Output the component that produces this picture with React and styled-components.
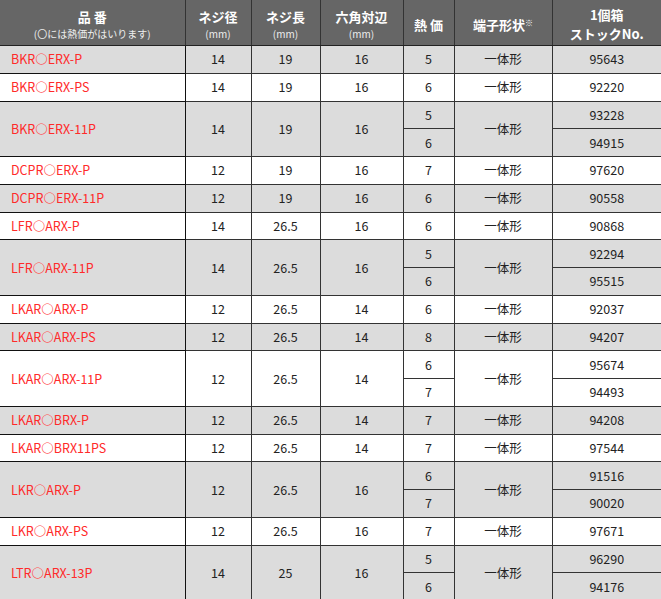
import React from 'react';
import styled, {createGlobalStyle} from 'styled-components';

const Global = createGlobalStyle`
  body {
    margin: 0;
    background: #fff;
    font-family: "Noto Sans CJK JP", "Noto Sans", sans-serif;
  }
`;

const Table = styled.table`
  width: 661px;
  border-collapse: collapse;
  table-layout: fixed;
  font-size: 12.5px;
  color: #222;
`;

const HeadCell = styled.th`
  background: #666;
  color: #fff;
  font-weight: bold;
  font-size: 13px;
  line-height: 19px;
  height: 42px;
  padding: 3px 0 0;
  text-align: center;
  vertical-align: middle;
  border-left: 1px solid #333;
  border-bottom: 1px solid #222;
  &:first-child {
    border-left: none;
  }
`;

const Sub = styled.span`
  display: block;
  font-size: 10px;
  line-height: 15px;
  font-weight: normal;
  color: #eee;
`;

const Mark = styled.sup`
  font-size: 8px;
  font-weight: normal;
  vertical-align: 4px;
  line-height: 0;
`;

const Row = styled.tr`
  background: ${(p) => (p.$gray ? '#dcdcdc' : '#fff')};
  height: 27.75px;
`;

const Cell = styled.td`
  padding: 0;
  text-align: center;
  vertical-align: middle;
  line-height: 16px;
  border: 1px solid #333;
  background: inherit;
`;

const NameCell = styled(Cell)`
  text-align: left;
  padding-left: 11px;
  color: #ff2a2a;
  border-left: none;
  border-color: #111;
`;

const Circle = styled.span`
  font-weight: 300;
  color: #ff5050;
`;

const LastCell = styled(Cell)`
  border-right: none;
`;

const items = [
  ['BKR', 'ERX-P', '14', '19', '16', ['5'], ['95643']],
  ['BKR', 'ERX-PS', '14', '19', '16', ['6'], ['92220']],
  ['BKR', 'ERX-11P', '14', '19', '16', ['5', '6'], ['93228', '94915']],
  ['DCPR', 'ERX-P', '12', '19', '16', ['7'], ['97620']],
  ['DCPR', 'ERX-11P', '12', '19', '16', ['6'], ['90558']],
  ['LFR', 'ARX-P', '14', '26.5', '16', ['6'], ['90868']],
  ['LFR', 'ARX-11P', '14', '26.5', '16', ['5', '6'], ['92294', '95515']],
  ['LKAR', 'ARX-P', '12', '26.5', '14', ['6'], ['92037']],
  ['LKAR', 'ARX-PS', '12', '26.5', '14', ['8'], ['94207']],
  ['LKAR', 'ARX-11P', '12', '26.5', '14', ['6', '7'], ['95674', '94493']],
  ['LKAR', 'BRX-P', '12', '26.5', '14', ['7'], ['94208']],
  ['LKAR', 'BRX11PS', '12', '26.5', '14', ['7'], ['97544']],
  ['LKR', 'ARX-P', '12', '26.5', '16', ['6', '7'], ['91516', '90020']],
  ['LKR', 'ARX-PS', '12', '26.5', '16', ['7'], ['97671']],
  ['LTR', 'ARX-13P', '14', '25', '16', ['5', '6'], ['96290', '94176']],
];

const widths = [185, 66, 69, 83, 51, 98, 109];

const App = () => {
  const rows = [];
  items.forEach(([pre, post, dia, len, hex, heat, stock], i) => {
    const gray = i % 2 === 0;
    const span = heat.length;
    const key = pre + post;
    rows.push(
      <Row key={key} $gray={gray}>
        <NameCell rowSpan={span}>
          {pre}
          <Circle>〇</Circle>
          {post}
        </NameCell>
        <Cell rowSpan={span}>{dia}</Cell>
        <Cell rowSpan={span}>{len}</Cell>
        <Cell rowSpan={span}>{hex}</Cell>
        <Cell>{heat[0]}</Cell>
        <Cell rowSpan={span}>一体形</Cell>
        <LastCell>{stock[0]}</LastCell>
      </Row>
    );
    for (let k = 1; k < span; k++) {
      rows.push(
        <Row key={key + k} $gray={gray}>
          <Cell>{heat[k]}</Cell>
          <LastCell>{stock[k]}</LastCell>
        </Row>
      );
    }
  });

  return (
    <>
      <Global />
      <Table>
        <colgroup>
          {widths.map((w, i) => (
            <col key={i} style={{width: w}} />
          ))}
        </colgroup>
        <thead>
          <tr>
            <HeadCell>
              品 番<Sub>(〇には熱価がはいります)</Sub>
            </HeadCell>
            <HeadCell>
              ネジ径<Sub>(mm)</Sub>
            </HeadCell>
            <HeadCell>
              ネジ長<Sub>(mm)</Sub>
            </HeadCell>
            <HeadCell>
              六角対辺<Sub>(mm)</Sub>
            </HeadCell>
            <HeadCell>熱 価</HeadCell>
            <HeadCell>
              端子形状<Mark>※</Mark>
            </HeadCell>
            <HeadCell>
              1個箱
              <br />
              ストックNo.
            </HeadCell>
          </tr>
        </thead>
        <tbody>{rows}</tbody>
      </Table>
    </>
  );
};

export default App;
